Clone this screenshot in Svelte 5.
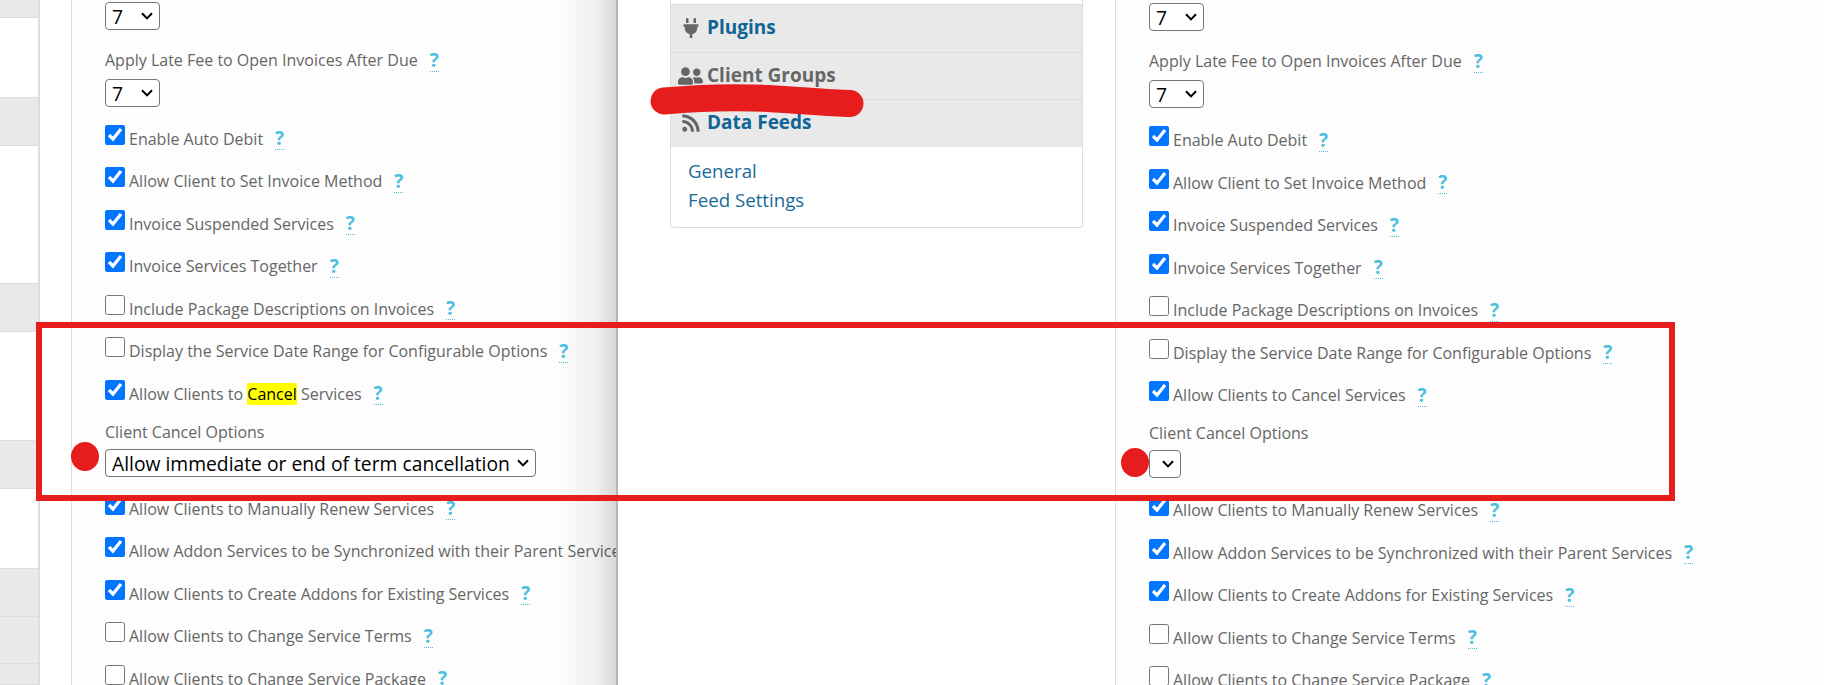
<script>
  const rowsA = [
    ['Enable Auto Debit', true],
    ['Allow Client to Set Invoice Method', true],
    ['Invoice Suspended Services', true],
    ['Invoice Services Together', true],
    ['Include Package Descriptions on Invoices', false],
    ['Display the Service Date Range for Configurable Options', false]
  ];
  const rowsB = [
    ['Allow Clients to Manually Renew Services', true],
    ['Allow Addon Services to be Synchronized with their Parent Services', true],
    ['Allow Clients to Create Addons for Existing Services', true],
    ['Allow Clients to Change Service Terms', false],
    ['Allow Clients to Change Service Package', false]
  ];
  const sideRows = [
    { h: 18, gray: true },
    { h: 80, gray: false },
    { h: 48, gray: true },
    { h: 138, gray: false },
    { h: 48, gray: true },
    { h: 109, gray: false },
    { h: 48, gray: true },
    { h: 80, gray: false },
    { h: 48, gray: true },
    { h: 47, gray: true },
    { h: 21, gray: true }
  ];
</script>

{#snippet row(text, checked)}
  <div class="row">
    <input type="checkbox" {checked} />
    <span class="text">{text}</span>
    <span class="help">?</span>
  </div>
{/snippet}

{#snippet form(filled)}
  <select class="num"><option>7</option></select>
  <div class="field-label first"><span>Apply Late Fee to Open Invoices After Due</span><span class="help">?</span></div>
  <select class="num second"><option>7</option></select>
  {#each rowsA as r}
    {@render row(r[0], r[1])}
  {/each}
  <div class="row">
    <input type="checkbox" checked />
    <span class="text">Allow Clients to {#if filled}<mark>Cancel</mark>{:else}Cancel{/if} Services</span>
    <span class="help">?</span>
  </div>
  <div class="field-label cancel">Client Cancel Options</div>
  {#if filled}
    <select class="cancel-select"><option>Allow immediate or end of term cancellation</option></select>
  {:else}
    <select class="cancel-select empty"></select>
  {/if}
  {#each rowsB as r}
    {@render row(r[0], r[1])}
  {/each}
{/snippet}

<main class="page">
  <section class="panel left">
    <aside class="side">
      {#each sideRows as s}
        <div class="side-row" class:gray={s.gray} style="height:{s.h}px"></div>
      {/each}
    </aside>
    <div class="form">{@render form(true)}</div>
  </section>

  <section class="mid">
    <nav class="card">
      <div class="strip"></div>
      <div class="head">
        <svg class="ic plug" viewBox="0 0 384 512"><path d="M320,32a32,32,0,0,0-64,0v96h64Zm48,128H16A16,16,0,0,0,0,176v32a16,16,0,0,0,16,16H32v32A160.07,160.07,0,0,0,160,412.8V512h64V412.8A160.07,160.07,0,0,0,352,256V224h16a16,16,0,0,0,16-16V176A16,16,0,0,0,368,160ZM128,32a32,32,0,0,0-64,0v96h64Z"/></svg>
        <span class="link">Plugins</span>
      </div>
      <div class="head">
        <svg class="ic users" viewBox="0 0 640 512"><path d="M192 256c61.9 0 112-50.1 112-112S253.9 32 192 32 80 82.1 80 144s50.1 112 112 112zm76.8 32h-8.3c-20.8 10-43.9 16-68.5 16s-47.6-6-68.5-16h-8.3C51.6 288 0 339.6 0 403.2V432c0 26.5 21.5 48 48 48h288c26.5 0 48-21.5 48-48v-28.8c0-63.6-51.6-115.2-115.2-115.2zM480 256c53 0 96-43 96-96s-43-96-96-96-96 43-96 96 43 96 96 96zm48 32h-3.8c-13.9 4.8-28.6 8-44.2 8s-30.3-3.2-44.2-8H432c-20.4 0-39.2 5.9-55.7 15.4 24.4 26.3 39.7 61.2 39.7 99.8v38.4c0 2.2-.5 4.3-.6 6.4H592c26.5 0 48-21.5 48-48 0-61.9-50.1-112-112-112z"/></svg>
        <span class="muted">Client Groups</span>
      </div>
      <div class="head last">
        <svg class="ic rss" viewBox="0 0 448 512"><path d="M128.081 415.959c0 35.369-28.672 64.041-64.041 64.041S0 451.328 0 415.959s28.672-64.041 64.041-64.041 64.04 28.673 64.04 64.041zm175.66 47.25c-8.354-154.6-132.185-278.587-286.95-286.95C7.656 175.765 0 183.105 0 192.253v48.069c0 8.415 6.49 15.472 14.887 16.018 111.832 7.284 201.473 96.702 208.772 208.772.547 8.397 7.604 14.887 16.018 14.887h48.069c9.149.001 16.489-7.655 15.995-16.79zm144.249.288C439.596 229.677 251.465 40.445 16.503 32.01 7.473 31.686 0 38.981 0 48.016v48.068c0 8.625 6.835 15.645 15.453 15.999 191.179 7.839 344.627 161.316 352.465 352.465.353 8.618 7.373 15.453 15.999 15.453h48.068c9.034-.001 16.329-7.474 16.005-16.504z"/></svg>
        <span class="link">Data Feeds</span>
      </div>
      <div class="subs">
        <div>General</div>
        <div>Feed Settings</div>
      </div>
    </nav>
  </section>

  <section class="panel right">
    <div class="form">{@render form(false)}</div>
  </section>

  <div class="frame"></div>
  <div class="dot dot-a"></div>
  <div class="dot dot-b"></div>
  <svg class="scribble" viewBox="0 0 220 50"><path d="M16 23 C50 20 90 19 120 20.5 C150 22 180 25 202 25.5" /></svg>
</main>

<style>
  :global(body) {
    margin: 0;
    background: #fff;
  }
  .page {
    position: relative;
    display: flex;
    width: 1824px;
    height: 685px;
    overflow: hidden;
    font-family: "Open Sans", "Noto Sans", sans-serif;
    color: #666;
  }
  .panel {
    display: flex;
    height: 685px;
    overflow: hidden;
  }
  .left {
    position: relative;
    flex: 0 0 616px;
  }
  .left::after {
    content: "";
    position: absolute;
    top: 0;
    right: 0;
    bottom: 0;
    width: 60px;
    background: linear-gradient(to right, rgba(0, 0, 0, 0), rgba(0, 0, 0, 0.05) 65%, rgba(0, 0, 0, 0.15));
  }
  .side {
    flex: 0 0 38px;
    border-right: 2px solid #ddd;
  }
  .side-row {
    box-sizing: border-box;
    border-bottom: 1px solid #ddd;
  }
  .side-row.gray {
    background: #e9e9e9;
  }
  .form {
    box-sizing: border-box;
    flex: 1;
    min-width: 0;
    padding: 1.5px 0 0 33px;
    border-left: 1px solid #ddd;
    margin-left: 31px;
    background: #fdfdfd;
    font-size: 16px;
    white-space: nowrap;
  }
  .right .form {
    padding: 3px 0 0 33px;
    margin-left: 0;
  }
  .right {
    flex: 1;
  }
  select {
    display: block;
    box-sizing: border-box;
    height: 28px;
    font-family: "Open Sans", sans-serif;
    font-size: 19.3px;
    color: #000;
    background: #fff url("data:image/svg+xml,%3Csvg xmlns='http://www.w3.org/2000/svg' width='12' height='8' viewBox='0 0 12 8'%3E%3Cpath d='M1 1.2 6 6.4 11 1.2' fill='none' stroke='%23000' stroke-width='2'/%3E%3C/svg%3E") no-repeat right 6px center;
    appearance: none;
    border: 1px solid #767676;
    border-radius: 4px;
    padding: 0 0 0 6px;
  }
  .num {
    width: 55px;
  }
  .num.second {
    margin: 9px 0 11px;
  }
  .field-label {
    height: 20px;
    line-height: 20px;
  }
  .field-label .help {
    vertical-align: top;
    margin-top: -1px;
  }
  .field-label.first {
    margin-top: 20px;
  }
  .field-label.cancel {
    margin-top: 6.5px;
  }
  .cancel-select {
    width: 431px;
    margin: 7px 0 11px;
  }
  .cancel-select.empty {
    width: 32px;
  }
  .row {
    display: flex;
    align-items: center;
    height: 42.5px;
  }
  input[type="checkbox"] {
    flex: none;
    width: 20px;
    height: 20px;
    margin: -8px 4px 0 0;
  }
  mark {
    background: #ff0;
    color: #000;
  }
  .help {
    display: inline-block;
    margin-left: 12px;
    font-size: 19px;
    line-height: 22px;
    font-weight: 700;
    color: #4fbfe0;
    border-bottom: 1px dotted #4fbfe0;
  }
  .mid {
    flex: 0 0 499px;
    box-sizing: border-box;
    border-left: 2px solid #b5b5b5;
    padding-left: 52px;
  }
  .card {
    box-sizing: border-box;
    width: 413px;
    height: 228px;
    border: 1px solid #ddd;
    border-top: 0;
    border-radius: 0 0 4px 4px;
    background: #fff;
  }
  .strip {
    height: 4px;
  }
  .head {
    display: flex;
    align-items: center;
    box-sizing: border-box;
    height: 47.5px;
    border-top: 1px solid #ddd;
    background: #e9e9e9;
    font-size: 19px;
    font-weight: 700;
    position: relative;
    padding: 0 0 2px 36px;
  }
  .head.last {
    padding-bottom: 3px;
  }
  .ic {
    position: absolute;
    fill: #666;
  }
  .plug {
    left: 12px;
    top: 13px;
    width: 16px;
    height: 20px;
  }
  .users {
    left: 7px;
    top: 13px;
    width: 25px;
    height: 20px;
  }
  .rss {
    left: 11px;
    top: 13px;
    width: 18px;
    height: 20px;
  }
  .link {
    color: #0f6496;
  }
  .muted {
    color: #666;
  }
  .subs {
    padding: 9px 0 0 17px;
    font-size: 18.7px;
    line-height: 29px;
    color: #1a6a9a;
  }
  .frame {
    position: absolute;
    left: 36px;
    top: 322px;
    width: 1639px;
    height: 179px;
    box-sizing: border-box;
    border: 6px solid #e71d1d;
    pointer-events: none;
  }
  .dot {
    position: absolute;
    width: 28px;
    height: 29px;
    border-radius: 50%;
    background: #e71d1d;
  }
  .dot-a {
    left: 71px;
    top: 442px;
  }
  .dot-b {
    left: 1121px;
    top: 448px;
  }
  .scribble {
    position: absolute;
    left: 648px;
    top: 78px;
    width: 220px;
    height: 50px;
    fill: none;
  }
  .scribble path {
    stroke: #e71d1d;
    stroke-width: 27px;
    stroke-linecap: round;
  }
</style>
